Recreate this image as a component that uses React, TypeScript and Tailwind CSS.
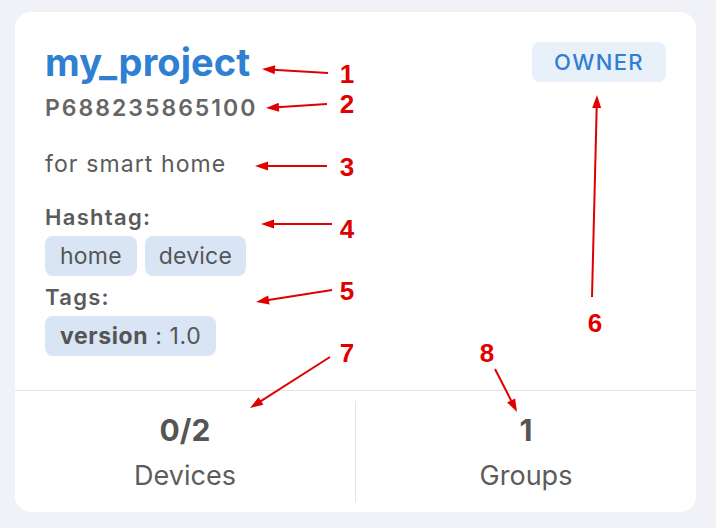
import React from "react";

type Arrow = { x1: number; y1: number; x2: number; y2: number };

const arrows: Arrow[] = [
  { x1: 328, y1: 73, x2: 262, y2: 69 },
  { x1: 327, y1: 104, x2: 266, y2: 108 },
  { x1: 327, y1: 166, x2: 255, y2: 166 },
  { x1: 332, y1: 224, x2: 261, y2: 224 },
  { x1: 332, y1: 290, x2: 256, y2: 302 },
  { x1: 592, y1: 297, x2: 597, y2: 95 },
  { x1: 330, y1: 357, x2: 250, y2: 408 },
  { x1: 495, y1: 369, x2: 517, y2: 412 },
];

const labels = [
  { t: "1", x: 347, y: 83 },
  { t: "2", x: 347, y: 113 },
  { t: "3", x: 347, y: 176 },
  { t: "4", x: 347, y: 238 },
  { t: "5", x: 347, y: 300 },
  { t: "6", x: 595, y: 332 },
  { t: "7", x: 347, y: 362 },
  { t: "8", x: 487, y: 362 },
];

function head(a: Arrow) {
  const dx = a.x2 - a.x1;
  const dy = a.y2 - a.y1;
  const len = Math.hypot(dx, dy);
  const ux = dx / len;
  const uy = dy / len;
  const L = 13;
  const W = 4.5;
  const bx = a.x2 - ux * L;
  const by = a.y2 - uy * L;
  const px = -uy;
  const py = ux;
  return {
    pts: `${a.x2},${a.y2} ${bx + px * W},${by + py * W} ${bx - px * W},${by - py * W}`,
    ex: bx + ux * 2,
    ey: by + uy * 2,
  };
}

export default function App() {
  return (
    <div
      className="relative w-[716px] h-[528px] bg-[#f0f2f8] pt-[12px] pl-[15px]"
      style={{ fontFamily: "Inter, 'Noto Sans', sans-serif" }}
    >
      <div className="w-[681px] h-[500px] bg-white rounded-[16px] flex flex-col overflow-hidden">
        <div className="h-[379px] border-b border-[#e4e4e6] px-[30px] pt-[27px]">
          <div className="flex justify-between items-start">
            <div className="text-[38px] leading-[46px] font-bold text-[#2f7fd3] tracking-[0.1px]">
              my_project
            </div>
            <div className="mt-[3px] h-[40px] px-[22px] rounded-[8px] bg-[#e8f0fa] text-[#2f7fd3] text-[22px] font-medium tracking-[1.4px] flex items-center">
              OWNER
            </div>
          </div>
          <div className="mt-[9px] text-[23px] leading-[28px] font-semibold text-[#666666] tracking-[2px]">
            P688235865100
          </div>
          <div className="mt-[28px] text-[23px] leading-[28px] text-[#5a5a5a] tracking-[1.1px]">
            for smart home
          </div>
          <div className="mt-[25px] text-[22px] leading-[28px] font-semibold text-[#5a5a5a] tracking-[1.3px]">
            Hashtag:
          </div>
          <div className="mt-[5px] flex gap-[8px]">
            <span className="h-[40px] px-[15px] rounded-[8px] bg-[#d9e5f5] text-[23px] text-[#555555] flex items-center tracking-[0.2px]">
              home
            </span>
            <span className="h-[40px] px-[14px] rounded-[8px] bg-[#d9e5f5] text-[23px] text-[#555555] flex items-center tracking-[0.2px]">
              device
            </span>
          </div>
          <div className="mt-[7px] text-[22px] leading-[28px] font-semibold text-[#5a5a5a] tracking-[1.3px]">
            Tags:
          </div>
          <div className="mt-[5px] flex">
            <span className="h-[40px] px-[15px] rounded-[8px] bg-[#d9e5f5] text-[23px] text-[#555555] flex items-center tracking-[0.6px]">
              <span className="font-bold">version</span>
              <span className="whitespace-pre"> : 1.0</span>
            </span>
          </div>
        </div>
        <div className="flex-1 flex">
          <div className="flex-1 flex flex-col items-center pt-[21px]">
            <div className="text-[30px] leading-[36px] font-bold text-[#555555]">0/2</div>
            <div className="mt-[12px] text-[27px] leading-[32px] text-[#5c5c5c]">Devices</div>
          </div>
          <div className="w-px bg-[#e4e4e6] my-[10px]" />
          <div className="flex-1 flex flex-col items-center pt-[21px]">
            <div className="text-[30px] leading-[36px] font-bold text-[#555555]">1</div>
            <div className="mt-[12px] text-[27px] leading-[32px] text-[#5c5c5c]">Groups</div>
          </div>
        </div>
      </div>

      <svg
        className="absolute left-0 top-0 pointer-events-none"
        width={716}
        height={528}
        viewBox="0 0 716 528"
      >
        {arrows.map((a, i) => {
          const h = head(a);
          return (
            <g key={i}>
              <line x1={a.x1} y1={a.y1} x2={h.ex} y2={h.ey} stroke="#e00000" strokeWidth={2} />
              <polygon points={h.pts} fill="#e00000" />
            </g>
          );
        })}
        {labels.map((l) => (
          <text
            key={l.t}
            x={l.x}
            y={l.y}
            textAnchor="middle"
            fill="#e00000"
            fontFamily="'Liberation Sans', Arial, sans-serif"
            fontWeight="bold"
            fontSize={26}
          >
            {l.t}
          </text>
        ))}
      </svg>
    </div>
  );
}
